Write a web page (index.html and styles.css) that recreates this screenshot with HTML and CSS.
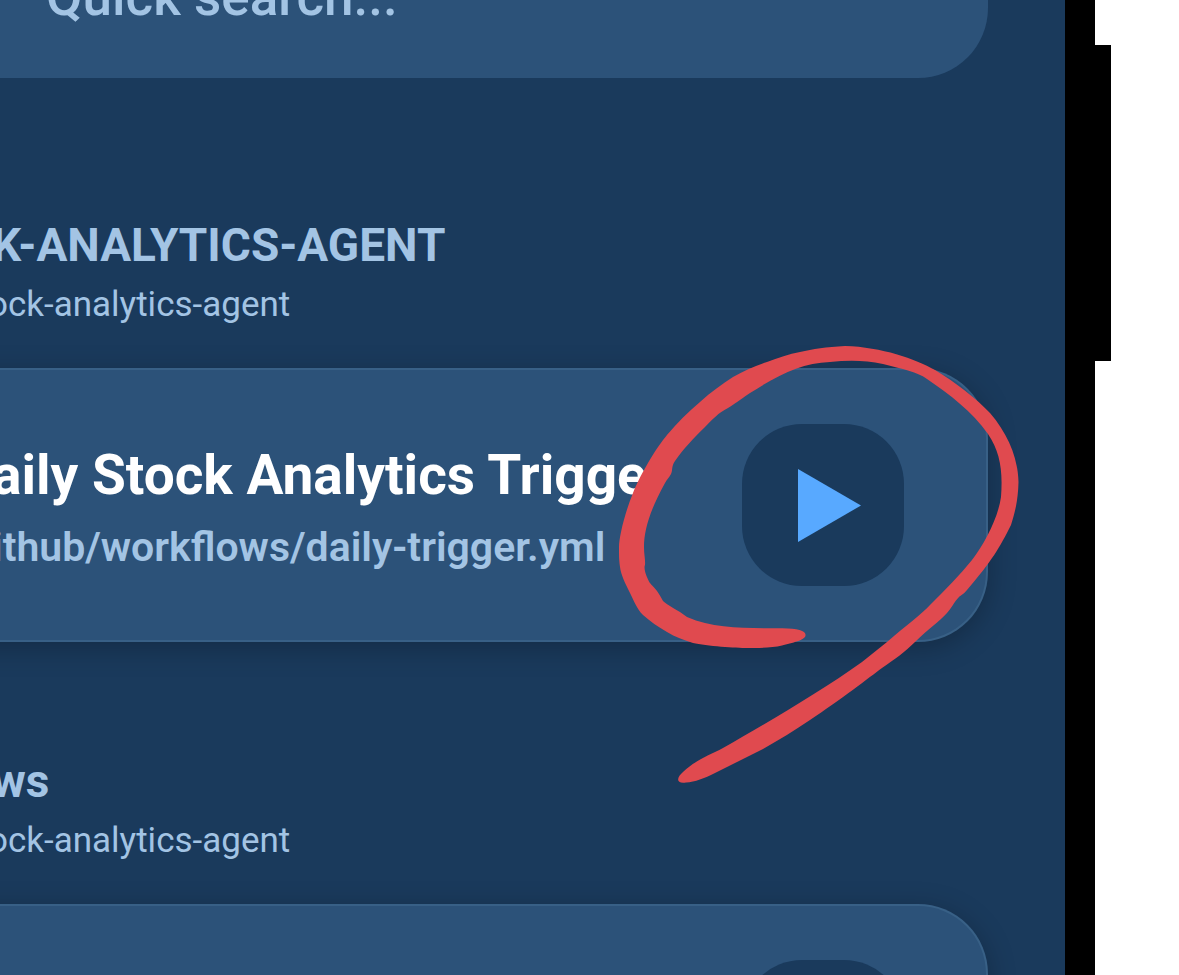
FILE: index.html
```html
<!DOCTYPE html>
<html lang="en">
<head>
<meta charset="utf-8">
<title>Workflows</title>
<link rel="stylesheet" href="styles.css">
</head>
<body>
<div class="phone">
  <main class="screen">
    <input class="search" type="search" placeholder="Quick search..." aria-label="Quick search">
    <section class="group">
      <h2 class="group-title">K-ANALYTICS-AGENT</h2>
      <p class="group-repo">ock-analytics-agent</p>
      <article class="card">
        <div class="card-text">
          <h3 class="card-title">aily Stock Analytics Trigge</h3>
          <p class="card-path">ithub/workflows/daily-trigger.yml</p>
        </div>
        <button class="play" type="button" aria-label="Run workflow">
          <svg class="play-icon" viewBox="0 0 63 73" aria-hidden="true"><path d="M0 0L63 36.5L0 73Z"/></svg>
        </button>
      </article>
    </section>
    <section class="group">
      <h2 class="group-title">ws</h2>
      <p class="group-repo">ock-analytics-agent</p>
      <article class="card">
        <div class="card-text"></div>
        <button class="play" type="button" aria-label="Run workflow">
          <svg class="play-icon" viewBox="0 0 63 73" aria-hidden="true"><path d="M0 0L63 36.5L0 73Z"/></svg>
        </button>
      </article>
    </section>
    <svg class="marker" viewBox="610 340 416 450" aria-hidden="true">
      <path d="M805.5 635C806 640 792 643 782 645.5S757 648 747 648S706 646 693 643C684 640 675 637 667 632C658 627 650 621 643 615C637 609 634 601 630 593C625 583 621 575 620 567S619 556 619 547S624 515 633 493S657 447 667 435S688 412 700 402C711 392 722 384 733 377C744 371 755 366 767 362C778 358 789 354 800 352C813 349 826 347 845 346C882 347 915 359 935 370C955 382 977 399 990 413C1008 434 1018 458 1018.5 482C1018 503 1014 515 1011 525C1000 547 992 561 967 590C964 594 961 595 959 597C954 602 951 609 947 613C939 622 928 629 915 642C905 652 895 659 882 668C870 677 840 700 810 720C795 730 779 740 763 749L713 774C705 778 695 782 686 782.5C675 784 677 777 683 772C697 759 710 755 723 748C765 724 820 692 862 662L887 642C905 626 922 614 930 605C945 590 960 575 972 560C985 543 998 518 1001 497C1003 470 1000 452 988 434C972 411 950 395 927 379C918 372 902 369 883 364C865 360 848 360 830 362C802 363 780 374 750 393C738 401 735 404 728 408C718 413 713 419 705 427C692 440 685 447 675 461C671 467 673 470 671 474C669 478 667 479 665 483C650 510 644 530 644 547C644 555 645.5 560 645 565C643 569 648 580 650 583C653 587 657 589 663 601C667 605 678 610 687 617C715 629 745 628 780 628.3C797 628 806 631 805.5 635Z"/>
    </svg>
  </main>
  <div class="side"></div>
</div>
</body>
</html>
```

FILE: styles.css
```css
* {
  box-sizing: border-box;
}

body {
  margin: 0;
  background: #fff;
  overflow: hidden;
  font-family: Roboto, "Liberation Sans", sans-serif;
}

.phone {
  display: flex;
  align-items: flex-start;
  height: 100vh;
  padding-right: 68px;
  overflow: hidden;
}

/* The list is scrolled: its top and left edges lie outside the window. */
.screen {
  position: relative;
  flex: 1;
  margin: -84px 0 0 -40px;
  padding-right: 77px;
  background: #1a3a5c;
  border-right: 30px solid #000;
  color: #a3c4e4;
}

.side {
  width: 16px;
  height: 316px;
  margin-top: 45px;
  background: #000;
}

.search {
  display: block;
  width: 100%;
  height: 162px;
  margin: 0 0 137px;
  padding: 0 86px;
  border: 0;
  border-radius: 0 70px 70px 0;
  background: #2c5279;
  color: #a3c4e4;
  font: 500 53px Roboto, "Liberation Sans", sans-serif;
}

.search::placeholder {
  color: #a3c4e4;
  opacity: 1;
}

.group {
  margin-bottom: 109px;
}

.group-title {
  margin: 0 0 6px;
  padding-left: 32px;
  font-size: 46px;
  line-height: 60px;
  font-weight: 700;
}

.group-repo {
  margin: 0 0 39px;
  padding-left: 28px;
  font-size: 35px;
  line-height: 48px;
}

.card {
  display: flex;
  align-items: center;
  justify-content: space-between;
  padding: 54px 82px 54px 32px;
  border: 2px solid #386086;
  border-left: 0;
  border-radius: 0 70px 70px 0;
  background: #2c5279;
  box-shadow: 0 6px 28px rgba(0, 0, 0, 0.25);
}

.card-text {
  display: flex;
  flex-direction: column;
  gap: 12px;
  white-space: nowrap;
}

.card-title {
  margin: 0;
  color: #fff;
  font-size: 55px;
  line-height: 72px;
  font-weight: 700;
}

.card-path {
  margin: 0;
  font-size: 41px;
  line-height: 48px;
  font-weight: 600;
}

.play {
  display: flex;
  flex: none;
  align-items: center;
  justify-content: center;
  width: 162px;
  height: 162px;
  padding: 0 0 0 12px;
  border: 0;
  border-radius: 60px;
  background: #1a3a5c;
}

.play-icon {
  width: 63px;
  height: 73px;
  fill: #58a9ff;
}

.marker {
  position: absolute;
  top: 424px;
  right: 39px;
  width: 416px;
  height: 450px;
  fill: #e04a4f;
}
```
